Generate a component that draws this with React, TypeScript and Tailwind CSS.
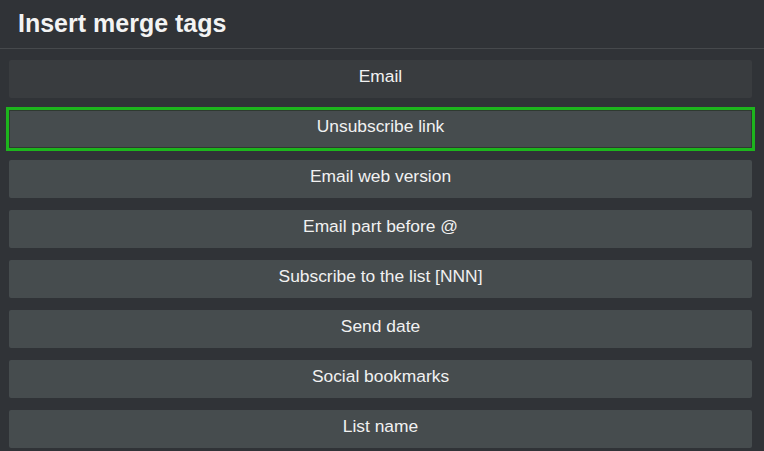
const tags = [
  "Email",
  "Unsubscribe link",
  "Email web version",
  "Email part before @",
  "Subscribe to the list [NNN]",
  "Send date",
  "Social bookmarks",
  "List name",
];

export default function App() {
  return (
    <div
      className="w-[764px] h-[451px] overflow-hidden bg-[#303337] text-[#f1f1f1]"
      style={{ fontFamily: '"Liberation Sans", Arial, sans-serif' }}
    >
      <header className="h-[49px] border-b border-[#46494c] pl-[18px] pt-[8px]">
        <h2 className="text-[25px] font-bold leading-[30px] text-[#f3f3f3]">Insert merge tags</h2>
      </header>
      <div className="flex flex-col gap-[12px] pl-[9px] pr-[12px] pt-[11px]">
        {tags.map((tag, i) => (
          <button
            key={tag}
            className={
              "h-[38px] w-full text-[17.4px] leading-[33px] pb-[5px] text-center " +
              (i === 0
                ? "rounded-[2px] bg-[#393c3f]"
                : i === 1
                ? "bg-[#464c4e] outline-[3px] outline-offset-0 outline-[#1db51d] shadow-[inset_0_0_0_1px_#2f3a31]"
                : "rounded-[2px] bg-[#464c4e]")
            }
          >
            {tag}
          </button>
        ))}
      </div>
    </div>
  );
}
